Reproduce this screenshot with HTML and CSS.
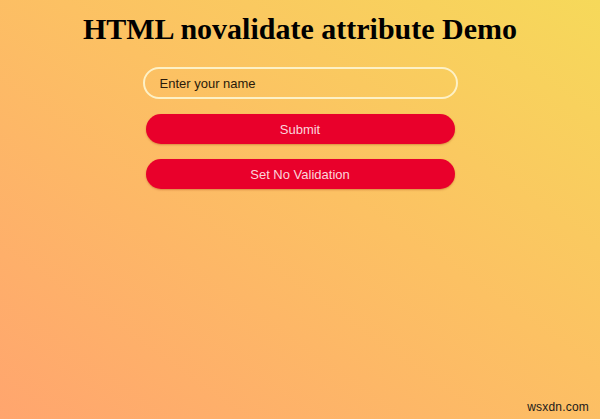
FILE: index.html
```html
<!DOCTYPE html>
<html>
<head>
<meta charset="utf-8">
<link rel="stylesheet" href="styles.css">
</head>
<body>
<div class="page">
  <h1 class="title">HTML novalidate attribute Demo</h1>
  <form class="form">
    <input class="name" type="text" placeholder="Enter your name" required>
    <button class="btn" type="submit">Submit</button>
    <button class="btn" type="button">Set No Validation</button>
  </form>
  <div class="mark">wsxdn.com</div>
</div>
</body>
</html>
```
FILE: styles.css
```css
html, body {
  margin: 0;
  padding: 0;
  height: 100%;
}
body {
  background: linear-gradient(to top right, #ffa56e 0%, #fcc163 55%, #f6d95a 100%);
  font-family: "Liberation Sans", Arial, sans-serif;
}
.page {
  position: relative;
  height: 419px;
  display: flex;
  flex-direction: column;
  align-items: center;
}
.title {
  margin: 12px 0 0 0;
  font-family: "Liberation Serif", "Times New Roman", serif;
  font-weight: bold;
  font-size: 30px;
  line-height: 34px;
  color: #000;
}
.form {
  margin-top: 21px;
  display: flex;
  flex-direction: column;
  align-items: center;
  gap: 15px;
}
.name {
  box-sizing: border-box;
  width: 315px;
  height: 32px;
  border: 2px solid #fdf1c6;
  border-radius: 16px;
  background: transparent;
  padding: 0 15px;
  font-family: "Liberation Sans", Arial, sans-serif;
  font-size: 13px;
  color: #222;
  outline: none;
}
.name::placeholder {
  color: #2a1a0a;
}
.btn {
  width: 309px;
  height: 30px;
  border: none;
  border-radius: 15px;
  background: #e9002b;
  color: #fbd5dc;
  font-family: "Liberation Sans", Arial, sans-serif;
  font-size: 13px;
  box-shadow: 0 1px 2px rgba(150, 40, 0, 0.35);
  cursor: pointer;
}
.mark {
  position: absolute;
  right: 11px;
  bottom: 5px;
  font-size: 12px;
  color: #1a1a1a;
  letter-spacing: 0.2px;
}
```
